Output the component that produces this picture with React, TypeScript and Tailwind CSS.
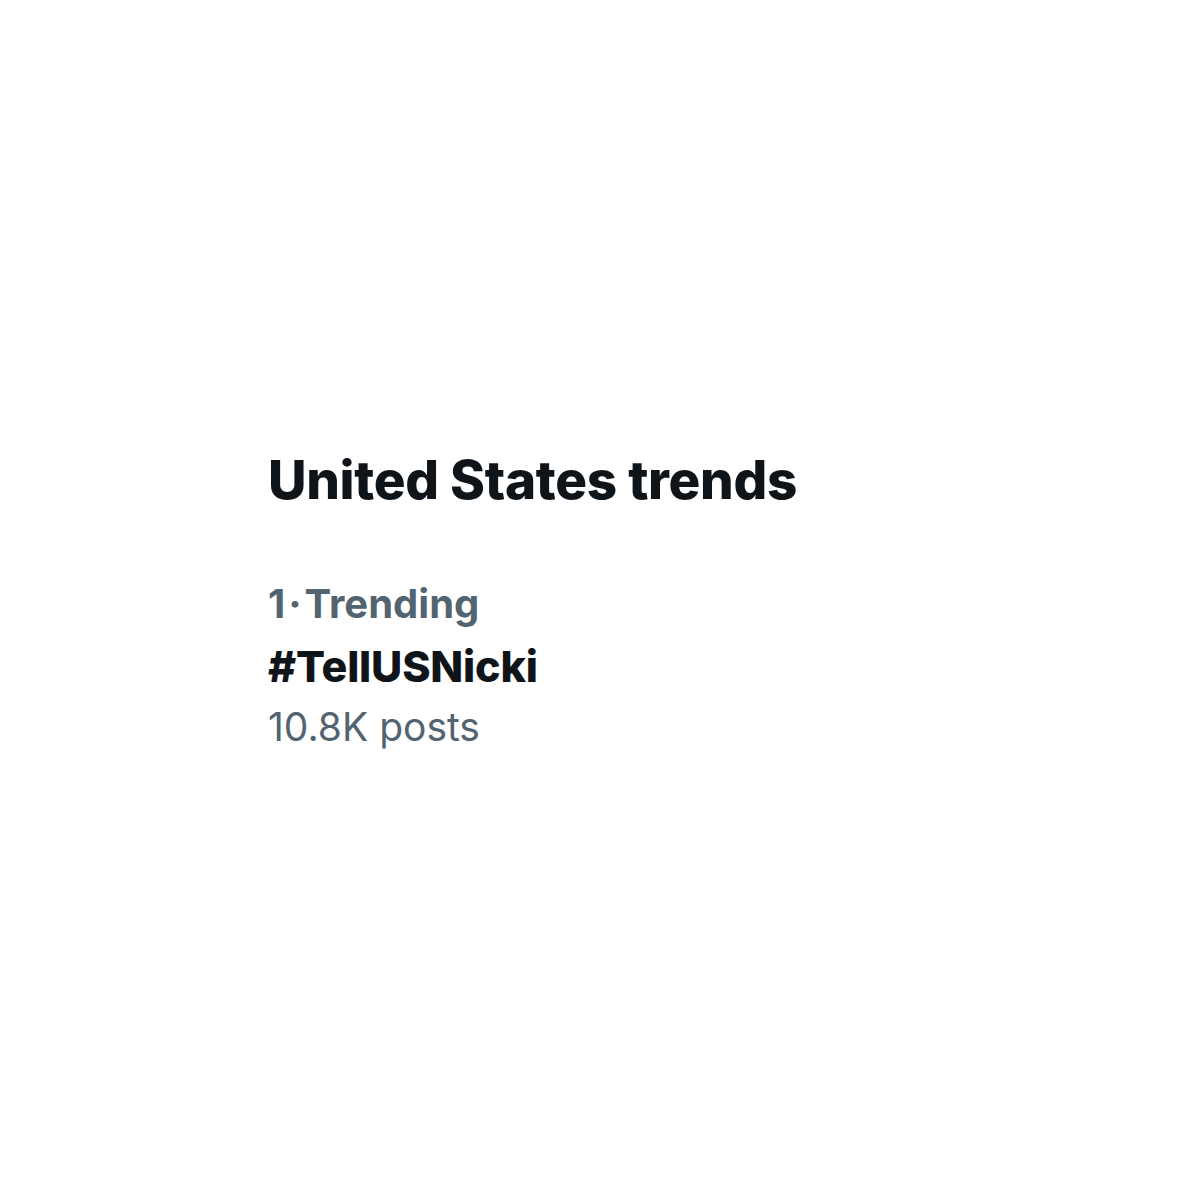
export default function App() {
  return (
    <div className="w-[1200px] h-[1200px] bg-white flex flex-col justify-start pl-[268px] pt-[448px] font-['Inter',sans-serif]">
      <h1 className="text-[53px] leading-[64px] font-extrabold text-[#0f1419] tracking-[-0.3px]">
        United States trends
      </h1>
      <div className="mt-[62px] flex flex-col">
        <p className="text-[40px] leading-[60px] font-bold text-[#536471]">
          1<span className="mx-[3px]">·</span>Trending
        </p>
        <p className="text-[43px] leading-[64px] font-extrabold text-[#0f1419] tracking-[-0.2px]">#TellUSNicki</p>
        <p className="text-[39px] leading-[58px] font-normal text-[#536471]">10.8K posts</p>
      </div>
    </div>
  );
}
